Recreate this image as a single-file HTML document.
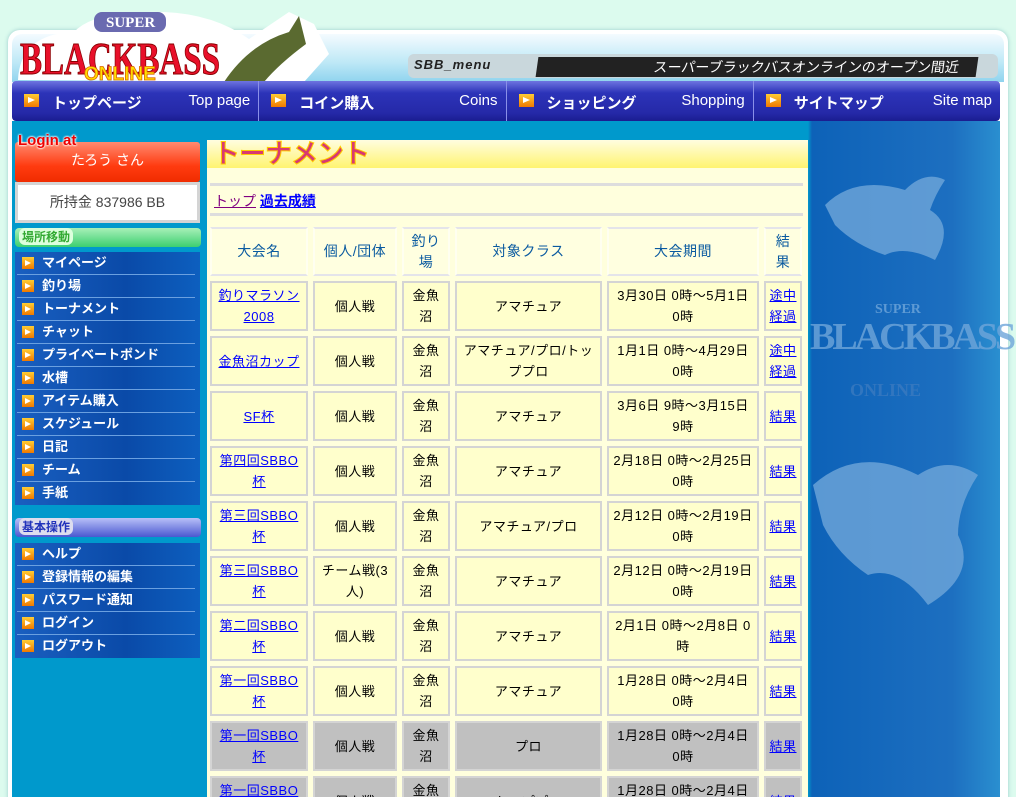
<!DOCTYPE html>
<html><head><meta charset="utf-8">
<style>
*{box-sizing:border-box;margin:0;padding:0}
html,body{width:1016px;height:797px;overflow:hidden}
body{background:#dcfbee;font-family:"Liberation Sans","Noto Sans CJK JP",sans-serif;font-size:13px;position:relative}
.frame{position:absolute;left:8px;top:30px;width:1000px;height:780px;background:#fff;border-radius:12px;box-shadow:0 0 4px #9cc}
.water{position:absolute;left:12px;top:34px;width:992px;height:48px;background:linear-gradient(180deg,#f4fbff,#bde8f6 60%,#8fd3ee);border-radius:10px 10px 0 0}
.logo{position:absolute;left:14px;top:4px;width:320px;height:80px}
.menuTag{position:absolute;left:408px;top:54px;width:590px;height:24px;background:#c9d7dc;border-radius:6px}
.menuTag b{position:absolute;left:6px;top:3px;font:italic bold 13px "Liberation Sans";color:#222;letter-spacing:1px}
.ticker{position:absolute;left:537px;top:57px;width:440px;height:20px;background:#222;color:#fff;font-size:14px;line-height:20px;text-align:right;padding-right:18px;transform:skewX(-8deg)}
.nav{position:absolute;left:12px;top:81px;width:988px;height:40px;background:linear-gradient(180deg,#6e74e0,#2c33b8 30%,#2529a8 80%,#1a1d90);border-radius:4px;display:flex}
.nav div{flex:1;position:relative;border-right:1px solid #8a90e8;color:#fff}
.nav .jp{position:absolute;left:40px;top:11px;font-weight:bold;font-size:15px}
.nav .en{position:absolute;right:8px;top:11px;font-size:15px}
.arr{display:inline-block;width:15px;height:13px;background:linear-gradient(#ffcc33,#f07800);position:absolute;left:12px;top:13px}
.arr:after{content:"";position:absolute;left:4px;top:3px;border-left:7px solid #fff;border-top:3.5px solid transparent;border-bottom:3.5px solid transparent}
.main{position:absolute;left:12px;top:121px;width:988px;height:680px;background:linear-gradient(90deg,#0099cc 0,#0099cc 796px,#0d62b8 800px,#1d6fc0 940px,#2a8fd0)}
.login{position:absolute;left:15px;top:142px;width:185px;height:40px;background:linear-gradient(#ff8a70,#ff3b10 60%,#f02c00);color:#fff;text-align:center;font-size:14px;line-height:36px;border-radius:3px}
.lat{position:absolute;left:18px;top:132px;font:bold 15px "Liberation Sans";color:#e00;text-shadow:0 0 2px #fff,0 0 2px #fff,0 0 2px #fff}
.money{position:absolute;left:15px;top:182px;width:185px;height:41px;background:#fff;border:3px solid #d4d4d4;text-align:center;line-height:35px;color:#444;font-size:14px}
.bar{position:absolute;left:15px;width:186px;height:19px;border-radius:4px}
.bar span{position:absolute;left:4px;top:0;font-weight:bold;font-size:12px;padding:0 3px;border-radius:6px}
.menu{position:absolute;left:15px;width:185px;background:linear-gradient(90deg,#1a5fc0,#0a4aa8 60%,#0d5fbf)}
.menu div{height:23px;border-bottom:1px solid #6aa0e0;margin:0 5px 0 2px;color:#fff;font-weight:bold;font-size:13px;line-height:22px;padding-left:25px;position:relative}
.menu div:last-child{border-bottom:none}
.menu .arr{left:5px;top:5px;width:12px;height:12px}
.menu .arr:after{left:3px;border-left-width:6px}
.panel{position:absolute;left:207px;top:140px;width:601px;height:700px;background:#ffffdd}
.title{height:28px;background:linear-gradient(#fffde0,#fff470);border-radius:4px 4px 0 0;padding-left:6px;font:bold 27px "Liberation Sans","Noto Sans CJK JP",sans-serif;color:#d83a70;line-height:28px;letter-spacing:-1px;-webkit-text-stroke:1px #fc0}
.crumb{position:absolute;left:3px;top:43px;width:593px;height:33px;border-top:3px solid #ddd;border-bottom:3px solid #ddd;padding:5px 4px;font-size:14px}
.crumb a{color:#800080}.crumb a+a{color:#00f;font-weight:bold}
table{position:absolute;left:-2px;top:82px;border-spacing:5px;width:602px;table-layout:fixed}
td,th{border:2px solid #d4d4d4;background:#ffffcc;text-align:center;font-weight:normal;line-height:21px;font-size:13px;letter-spacing:.5px;padding:0 3px;overflow:hidden}
th{border-color:#e4e4ea #fffff0;background:#ffffe0;color:#0a5aa0;font-size:14px;height:49px}
td{height:50px}
td a{color:#00f}
td:first-child{padding:0 6px}
tr.g td{background:#c0c0c0}
.fish{position:absolute;color:#6fa6da;font:bold 38px "Liberation Serif";opacity:.8}
</style></head><body>
<div class="frame"></div>
<div class="water"></div>
<div class="menuTag"><b>SBB_menu</b></div>
<div class="ticker">スーパーブラックバスオンラインのオープン間近</div>
<svg class="logo" viewBox="0 0 320 80">
<path d="M4 76 Q6 30 60 28 Q80 6 150 8 Q200 10 235 35 L275 8 L300 20 L315 50 L290 78 Z" fill="#fff"/>
<rect x="80" y="8" width="72" height="20" rx="8" fill="#6a6ab0"/>
<text x="92" y="23" font-family="Liberation Serif" font-weight="bold" font-size="15" fill="#fff">SUPER</text>
<text x="6" y="70" font-family="Liberation Serif" font-weight="bold" font-size="46" fill="#e8102a" stroke="#800" stroke-width="1" textLength="200" lengthAdjust="spacingAndGlyphs">BLACKBASS</text>
<text x="70" y="76" font-family="Liberation Sans" font-weight="bold" font-size="19" fill="#ffe000" stroke="#d60" stroke-width=".8">ONLINE</text>
<path d="M210 78 Q235 40 275 28 L285 12 L292 40 Q265 60 250 78 Z" fill="#5a6a30"/>
</svg>
<div class="nav">
<div><i class="arr"></i><span class="jp">トップページ</span><span class="en">Top page</span></div>
<div><i class="arr"></i><span class="jp">コイン購入</span><span class="en">Coins</span></div>
<div><i class="arr"></i><span class="jp">ショッピング</span><span class="en">Shopping</span></div>
<div style="border:none"><i class="arr"></i><span class="jp">サイトマップ</span><span class="en">Site map</span></div>
</div>
<div class="main"></div>
<svg style="position:absolute;left:815px;top:165px" width="150" height="110" viewBox="0 0 150 110"><path d="M10 40 Q40 10 90 25 Q110 5 130 15 Q120 30 115 45 Q140 60 120 95 Q90 80 70 90 Q40 80 20 60 Z" fill="#6fa6da" opacity=".8"/></svg>
<div class="fish" style="left:810px;top:315px;letter-spacing:-3px">BLACKBASS</div>
<div class="fish" style="left:875px;top:302px;font-size:14px">SUPER</div>
<div class="fish" style="left:850px;top:380px;font-size:18px;color:#3a7ac0">ONLINE</div>
<svg style="position:absolute;left:808px;top:445px" width="190" height="170" viewBox="0 0 190 170"><path d="M5 40 Q50 0 110 30 Q140 10 170 30 Q150 60 150 90 Q170 130 120 160 Q90 120 60 130 Q30 110 15 80 Z" fill="#6fa6da" opacity=".8"/></svg>
<div class="login">たろう さん</div>
<div class="lat">Login at</div>
<div class="money">所持金 837986 BB</div>
<div class="bar" style="top:228px;background:linear-gradient(#a8f0b8,#3ccf70)"><span style="background:#dfd;color:#3a3">場所移動</span></div>
<div class="menu" style="top:252px">
<div><i class="arr"></i>マイページ</div><div><i class="arr"></i>釣り場</div><div><i class="arr"></i>トーナメント</div><div><i class="arr"></i>チャット</div><div><i class="arr"></i>プライベートポンド</div><div><i class="arr"></i>水槽</div><div><i class="arr"></i>アイテム購入</div><div><i class="arr"></i>スケジュール</div><div><i class="arr"></i>日記</div><div><i class="arr"></i>チーム</div><div><i class="arr"></i>手紙</div>
</div>
<div class="bar" style="top:518px;background:linear-gradient(#b8c0f8,#4a58d0)"><span style="color:#2233bb;background:#dde">基本操作</span></div>
<div class="menu" style="top:543px">
<div><i class="arr"></i>ヘルプ</div><div><i class="arr"></i>登録情報の編集</div><div><i class="arr"></i>パスワード通知</div><div><i class="arr"></i>ログイン</div><div><i class="arr"></i>ログアウト</div>
</div>
<div class="panel">
<div class="title">トーナメント</div>
<div class="crumb"><a href="#">トップ</a> <a href="#">過去成績</a></div>
<table>
<colgroup><col style="width:98px"><col style="width:84px"><col style="width:48px"><col style="width:147px"><col style="width:152px"><col style="width:38px"></colgroup>
<tr><th>大会名</th><th>個人/団体</th><th>釣り場</th><th>対象クラス</th><th>大会期間</th><th style="padding:0 8px">結果</th></tr>
<tr><td><a href="#">釣りマラソン2008</a></td><td>個人戦</td><td>金魚沼</td><td>アマチュア</td><td>3月30日 0時～5月1日 0時</td><td><a href="#">途中経過</a></td></tr>
<tr><td><a href="#">金魚沼カップ</a></td><td>個人戦</td><td>金魚沼</td><td>アマチュア/プロ/トッププロ</td><td>1月1日 0時～4月29日 0時</td><td><a href="#">途中経過</a></td></tr>
<tr><td><a href="#">SF杯</a></td><td>個人戦</td><td>金魚沼</td><td>アマチュア</td><td>3月6日 9時～3月15日 9時</td><td><a href="#">結果</a></td></tr>
<tr><td><a href="#">第四回SBBO杯</a></td><td>個人戦</td><td>金魚沼</td><td>アマチュア</td><td>2月18日 0時～2月25日 0時</td><td><a href="#">結果</a></td></tr>
<tr><td><a href="#">第三回SBBO杯</a></td><td>個人戦</td><td>金魚沼</td><td>アマチュア/プロ</td><td>2月12日 0時～2月19日 0時</td><td><a href="#">結果</a></td></tr>
<tr><td><a href="#">第三回SBBO杯</a></td><td>チーム戦(3人)</td><td>金魚沼</td><td>アマチュア</td><td>2月12日 0時～2月19日 0時</td><td><a href="#">結果</a></td></tr>
<tr><td><a href="#">第二回SBBO杯</a></td><td>個人戦</td><td>金魚沼</td><td>アマチュア</td><td>2月1日 0時～2月8日 0時</td><td><a href="#">結果</a></td></tr>
<tr><td><a href="#">第一回SBBO杯</a></td><td>個人戦</td><td>金魚沼</td><td>アマチュア</td><td>1月28日 0時～2月4日 0時</td><td><a href="#">結果</a></td></tr>
<tr class="g"><td><a href="#">第一回SBBO杯</a></td><td>個人戦</td><td>金魚沼</td><td>プロ</td><td>1月28日 0時～2月4日 0時</td><td><a href="#">結果</a></td></tr>
<tr class="g"><td><a href="#">第一回SBBO杯</a></td><td>個人戦</td><td>金魚沼</td><td>トッププロ</td><td>1月28日 0時～2月4日 0時</td><td><a href="#">結果</a></td></tr>
</table>
</div>
</body></html>
